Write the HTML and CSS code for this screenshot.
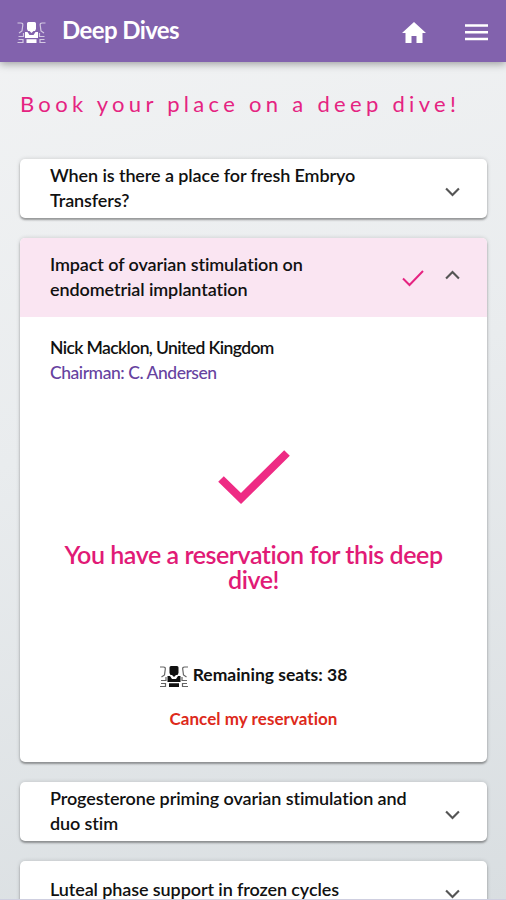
FILE: index.html
```html
<!DOCTYPE html>
<html lang="en">
<head>
<meta charset="utf-8">
<title>Deep Dives</title>
<link rel="stylesheet" href="styles.css">
</head>
<body>
<svg width="0" height="0" class="defs" aria-hidden="true">
  <symbol id="seat" viewBox="0 0 28 21">
    <path d="M9.500 1.500Q9.500 0 11 0h6Q18.500 0 18.500 1.500V7l-1 2h-1.500L14 11l-2-2h-1.500l-1-2z" fill="currentColor"/>
    <path d="M7.500 10h2.500l2 3h4l2-3h2.500v6h-13zM9 17.300h10V21H9z" fill="currentColor"/>
    <path d="M0 1h3.500q2 0 1.800 2L4.500 9l-3 2M6 11v3.500H1M1 17.500h4.500v3H0M28 1h-3.500q-2 0-1.800 2l.8 6 3 2M22 11v3.500h5M27 17.500h-4.500v3H28" fill="none" stroke="currentColor" stroke-width="1.200" opacity=".65"/>
  </symbol>
  <symbol id="chevron" viewBox="0 0 14 9"><path d="M1 1.200l6 6 6-6" fill="none" stroke="currentColor" stroke-width="2"/></symbol>
  <symbol id="check" viewBox="0 0 72 55"><path d="M3 29L23 48.500 69 3" fill="none" stroke="currentColor" stroke-width="8"/></symbol>
  <symbol id="check-thin" viewBox="0 0 22 17"><path d="M1 8.500l6.500 6.500L21 1" fill="none" stroke="currentColor" stroke-width="2"/></symbol>
</svg>
<header class="bar">
  <svg class="bar-seat"><use href="#seat"/></svg>
  <h1 class="bar-title">Deep Dives</h1>
  <svg class="home" viewBox="0 0 24 21"><path d="M12 0l12 11h-3.500v10h-6v-7h-5v7h-6V11H0z" fill="currentColor"/></svg>
  <svg class="menu" viewBox="0 0 23 17"><path d="M0 1.500h23M0 8.200h23M0 15h23" stroke="currentColor" stroke-width="2.600"/></svg>
</header>
<main class="content">
  <h2 class="intro">Book your place on a deep dive!</h2>
  <section class="card row">
    <h3 class="topic">When is there a place for fresh Embryo<br>Transfers?</h3>
    <svg class="chevron"><use href="#chevron"/></svg>
  </section>
  <section class="card">
    <div class="row open">
      <h3 class="topic">Impact of ovarian stimulation on<br>endometrial implantation</h3>
      <svg class="mini-check"><use href="#check-thin"/></svg>
      <svg class="chevron up"><use href="#chevron"/></svg>
    </div>
    <div class="details">
      <p class="speaker">Nick Macklon, United Kingdom</p>
      <p class="chair">Chairman: C. Andersen</p>
      <svg class="big-check"><use href="#check"/></svg>
      <p class="reserved">You have a reservation for this deep<br>dive!</p>
      <p class="seats"><svg class="seat-icon"><use href="#seat"/></svg><span>Remaining seats: 38</span></p>
      <a class="cancel">Cancel my reservation</a>
    </div>
  </section>
  <section class="card row">
    <h3 class="topic">Progesterone priming ovarian stimulation and<br>duo stim</h3>
    <svg class="chevron"><use href="#chevron"/></svg>
  </section>
  <section class="card row">
    <h3 class="topic">Luteal phase support in frozen cycles</h3>
    <svg class="chevron"><use href="#chevron"/></svg>
  </section>
</main>
</body>
</html>
```
FILE: styles.css
```css
* { box-sizing: border-box; }
html, body { height: 900px; overflow: hidden; }
body {
  margin: 0;
  display: flex;
  flex-direction: column;
  font-family: Lato, "Open Sans", sans-serif;
  font-variant-ligatures: none;
  color: #111;
  border-bottom: 1px solid #cfcfe0;
  background: linear-gradient(165deg, #f2f3f4 0%, #e9ecee 45%, #d9dee1 100%);
}
h1, h2, h3, p { margin: 0; }
svg { display: block; flex: none; }
.defs { position: absolute; }
.bar {
  flex: none;
  display: flex;
  align-items: center;
  height: 62px;
  padding: 0 18px 0 17px;
  color: #fff;
  background: #8262ad;
  box-shadow: 0 2px 8px rgba(0, 0, 0, .35);
}
.bar-seat { width: 29px; height: 21px; margin-top: 2px; }
.bar-title { flex: 1; margin: -4px 0 0 16px; font-size: 24px; font-weight: 700; letter-spacing: -.6px; }
.home { width: 24px; height: 21px; margin: 2px 39px 0 0; }
.menu { width: 23px; height: 17px; margin-top: 2px; }
.content { flex: 1; min-height: 0; overflow: hidden; display: flex; flex-direction: column; gap: 20px; padding: 0 19px 0 20px; }
.bar { position: relative; }
.intro {
  flex: none;
  height: 77px;
  padding-top: 25px;
  font-size: 22px;
  line-height: 34px;
  font-weight: 400;
  letter-spacing: 4.300px;
  white-space: nowrap;
  color: #e52381;
}
.card {
  flex: none;
  border-radius: 5px;
  background: #fff;
  box-shadow: 0 2px 2px rgba(0, 0, 0, .32), 0 0 4px rgba(0, 0, 0, .16);
}
.row { display: flex; align-items: center; min-height: 59px; padding: 0 27px 0 30px; }
.topic { flex: 1; font-size: 18px; line-height: 25.500px; font-weight: 600; letter-spacing: -.1px; white-space: nowrap; margin-top: -1px; }
.chevron { width: 15px; height: 10px; margin-top: 6px; color: #555; }
.open { height: 79px; border-radius: 5px 5px 0 0; background: #fae5f2; }
.up { transform: rotate(180deg); margin-top: -6px; }
.mini-check { width: 22px; height: 17px; margin: 2px 21px 0 0; color: #e52381; }
.details { display: flex; flex-direction: column; align-items: center; height: 445px; padding: 18px 30px 0; }
.speaker, .chair { align-self: flex-start; font-size: 17.500px; line-height: 25px; font-weight: 600; letter-spacing: -.6px; }
.chair { color: #66429f; font-weight: 500; letter-spacing: -.45px; }
.big-check { width: 72px; height: 55px; margin-top: 65px; color: #ee2b84; }
.reserved { margin-top: 37px; font-size: 25px; line-height: 25px; font-weight: 600; letter-spacing: -.45px; text-align: center; white-space: nowrap; color: #e11a76; }
.seats { display: flex; align-items: center; gap: 5px; margin-top: 70px; font-size: 17.500px; line-height: 26px; font-weight: 700; }
.seat-icon { width: 28px; height: 21px; margin-top: 3px; }
.cancel { margin-top: 18px; font-size: 17px; line-height: 26px; font-weight: 700; letter-spacing: .05px; color: #dd2a1b; }
```
